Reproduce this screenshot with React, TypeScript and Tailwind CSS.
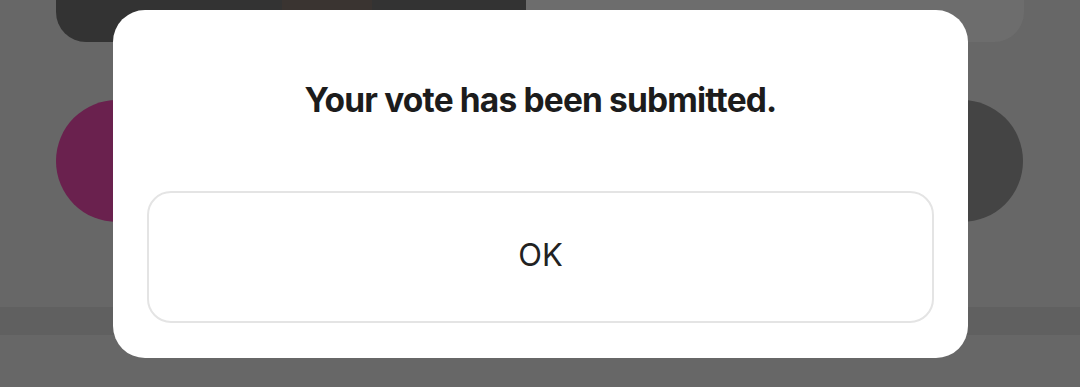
import React from "react";

const App = () => {
        return (
                <div className="relative w-[1080px] h-[387px] overflow-hidden bg-[#676767] font-['Inter','Liberation_Sans',sans-serif]">
                        {/* page behind the dialog */}
                        <div className="flex flex-col">
                                <div className="mx-[56px] w-[968px] h-[42px] flex rounded-b-[30px] overflow-hidden">
                                        <div className="w-[470px] h-full bg-[#333333]">
                                                <div className="ml-[226px] w-[90px] h-full bg-[#3a3431]"></div>
                                        </div>
                                        <div className="flex-1 h-full bg-[#6d6d6d]"></div>
                                </div>
                                <div className="mt-[58px] flex justify-between pl-[56px] pr-[57px]">
                                        <div className="w-[122px] h-[122px] rounded-full bg-[#6a214e]"></div>
                                        <div className="w-[122px] h-[122px] rounded-full bg-[#444444]"></div>
                                </div>
                                <div className="mt-[85px] h-[28px] bg-[#606060]"></div>
                        </div>

                        {/* dialog */}
                        <div className="absolute left-[113px] top-[10px] w-[855px] h-[348px] rounded-[32px] bg-white flex flex-col px-[34px] pb-[35px]">
                                <div className="flex-1 flex items-center justify-center">
                                        <p className="text-[33.5px] font-bold tracking-tight text-[#1c1c1c]">Your vote has been submitted.</p>
                                </div>
                                <button className="h-[132px] w-full rounded-[24px] border-2 border-[#e4e4e4] bg-white pb-[3px]">
                                        <span className="text-[31px] text-[#222222]">OK</span>
                                </button>
                        </div>
                </div>
        );
};

export default App;
